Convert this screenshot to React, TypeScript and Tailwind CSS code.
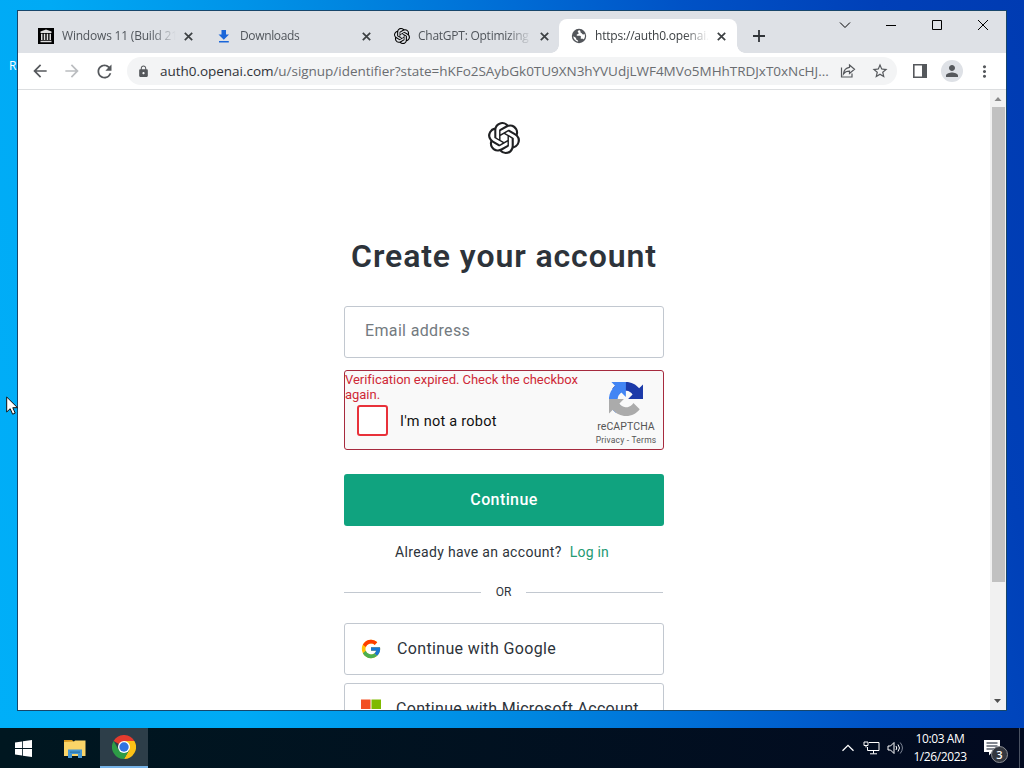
import * as React from "react"
import clsx from "clsx"
import { FcGoogle } from "react-icons/fc"
import { SiOpenai } from "react-icons/si"
import { MdArrowBack, MdArrowForward, MdRefresh, MdLock, MdStarBorder, MdPerson, MdMoreVert } from "react-icons/md"

interface TabItem {
    id: number
    title: string
    icon: React.ReactNode
    titleClass: string
    active?: boolean
    divider?: boolean
}

const tabs: TabItem[] = [
    { id: 1, title: "Windows 11 (Build 21", icon: <ArchiveIcon />, titleClass: "tracking-[-0.2px]", divider: true },
    { id: 2, title: "Downloads", icon: <DownloadIcon />, titleClass: "tracking-[-0.35px]", divider: true },
    { id: 3, title: "ChatGPT: Optimizing", icon: <SiOpenai size={16} />, titleClass: "tracking-[-0.25px]" },
    { id: 4, title: "https://auth0.openai.", icon: <GlobeIcon />, titleClass: "tracking-[-0.2px]", active: true },
]

function ArchiveIcon() {
    return (
        <svg width="16" height="16" viewBox="0 0 16 16">
            <path d="M0 0h16v16H0z" fill="#000" />
            <path d="M8 1.5 13.5 3.5V5h-11V3.5zM3 5.8h1.5V12H3zM5.8 5.8h1.5V12H5.8zM8.7 5.8h1.5V12H8.7zM11.5 5.8H13V12h-1.5zM2.5 12.7h11v1.5h-11z" fill="#ddd" />
        </svg>
    )
}

function DownloadIcon() {
    return (
        <svg width="14" height="16" viewBox="0 0 14 16">
            <path d="M4.5 2H9v4.500h3L6.800 11.800 1.500 6.500h3zM2 13h9.800v1.600H2z" fill="#1a66d9" />
        </svg>
    )
}

function GlobeIcon() {
    return (
        <svg width="16" height="16" viewBox="0 0 16 16" className="shrink-0">
            <circle cx="8" cy="8" r="7.2" fill="#53565b" />
            <path d="M8.600 2.300c-2 .2-2.300 1.500-1.300 2.300.9.700.2 1.500-.9 1.600-1 .1-.9 1.200-.2 1.600h2.700c1.100.1 1.200 1.300.8 2-.3.700.4 1.200 1.400 1 .9-.1 1.600.3 1.700.6 1.500-1.900 1.400-4 .7-5.300-.9.600-2.100.5-2.400-.4-.3-.8-1.200-.6-1.500-1.200-.3-.800.2-1.500-1-2.200zM2.200 8.200c.2 2.800 2.200 5 4.900 5.500.1-.9-.3-1.500-1-1.700-.9-.3-.8-1.300-1.200-2-.5-.8-1.600-1.200-2.700-1.800z" fill="#fff" />
        </svg>
    )
}

function CloseIcon() {
    return (
        <svg width="9" height="9" viewBox="0 0 9 9" className="shrink-0">
            <path d="M.8.8l7.400 7.400M8.200.8L.8 8.200" stroke="#3c4043" strokeWidth="1.7" />
        </svg>
    )
}

function Tab({ tab }: { tab: TabItem }) {
    return (
        <div
            className={clsx(
                "relative flex h-[34px] w-[178px] shrink-0 items-center pl-3",
                tab.active ? "-ml-px rounded-t-lg bg-white" : "bg-[#dee1e6]",
            )}
        >
            <div className="flex w-4 shrink-0 items-center justify-center">{tab.icon}</div>
            <div
                className={clsx(
                    "ml-2 w-[114px] overflow-hidden whitespace-nowrap text-[12px] [mask-image:linear-gradient(to_right,#000_78%,transparent)]",
                    tab.active ? "text-[#3c4043]" : "text-[#50555b]",
                    tab.titleClass,
                )}
            >
                {tab.title}
            </div>
            <div className="ml-2">
                <CloseIcon />
            </div>
            {tab.divider && <div className="absolute right-[-1px] top-[7px] h-5 w-px bg-[#8b8f96]" />}
            {tab.active && (
                <>
                    <div className="absolute bottom-0 left-[-8px] size-2 bg-[radial-gradient(circle_at_top_left,transparent_7.5px,#fff_8px)]" />
                    <div className="absolute bottom-0 right-[-8px] size-2 bg-[radial-gradient(circle_at_top_right,transparent_7.5px,#fff_8px)]" />
                </>
            )}
        </div>
    )
}

function TabStrip() {
    return (
        <div className="flex h-[42px] shrink-0 items-start bg-[#dee1e6] pl-2">
            <div className="flex pt-2">
                {tabs.map((tab) => (
                    <Tab key={tab.id} tab={tab} />
                ))}
            </div>
            <svg width="12" height="12" viewBox="0 0 12 12" className="ml-4 mt-[19px]">
                <path d="M6 0v12M0 6h12" stroke="#303438" strokeWidth="1.8" />
            </svg>
            {/* Window controls */}
            <div className="ml-auto mr-[17px] mt-[8px] flex gap-[34px] text-black">
                <svg width="12" height="12" viewBox="0 0 12 12" fill="none" stroke="currentColor">
                    <path d="M1 3.5l5 5 5-5" />
                </svg>
                <svg width="12" height="12" viewBox="0 0 12 12" fill="none" stroke="currentColor">
                    <path d="M1 6.5h10" />
                </svg>
                <svg width="12" height="12" viewBox="0 0 12 12" fill="none" stroke="currentColor">
                    <path d="M1.5 1.5h9v9h-9z" />
                </svg>
                <svg width="12" height="12" viewBox="0 0 12 12" fill="none" stroke="currentColor">
                    <path d="M1 1l10 10M11 1L1 11" />
                </svg>
            </div>
        </div>
    )
}

function Toolbar() {
    return (
        <div className="flex h-[37px] shrink-0 items-center border-b border-[#dcdee0] bg-white pl-3 text-[#55585c]">
            <MdArrowBack size={20} />
            <MdArrowForward size={20} className="ml-3 text-[#bbbdc0]" />
            <MdRefresh size={21} className="ml-3" />
            <div className="ml-3 flex h-7 w-[770px] items-center rounded-full bg-[#f3f4f5] pl-[10px]">
                <MdLock size={13} className="shrink-0" />
                <div className="ml-[10px] w-[676px] whitespace-nowrap text-[13.5px] tracking-[-0.03px] text-[#6a6d71]">
                    <span className="text-[#303338]">auth0.openai.com</span>
                    /u/signup/identifier?state=hKFo2SAybGk0TU9XN3hYVUdjLWF4MVo5MHhTRDJxT0xNcHJ...
                </div>
                <svg width="16" height="16" viewBox="0 0 16 16" fill="none" stroke="currentColor" strokeWidth="1.2" className="ml-1 shrink-0">
                    <path d="M1.5 4.5V14H12v-3.500M9.500 2l5 4.200-5 4.200V8.200C6.500 8.200 4.800 9 3.500 10.900 3.800 7.500 5.800 4.800 9.500 4.300z" />
                </svg>
                <MdStarBorder size={18} className="ml-[15px] shrink-0" />
            </div>
            <svg width="14" height="14" viewBox="0 0 14 14" className="ml-4">
                <path d="M.8.8h12.400v12.400H.8z" fill="none" stroke="currentColor" strokeWidth="1.6" />
                <path d="M9 1h4.500v12H9z" fill="currentColor" />
            </svg>
            <div className="ml-[14px] flex size-[22px] items-center justify-center rounded-full bg-[#dee1e6]">
                <MdPerson size={18} />
            </div>
            <MdMoreVert size={19} className="ml-[12px]" />
        </div>
    )
}

function RecaptchaLogo() {
    return (
        <svg width="34" height="34" viewBox="0 0 64 64">
            <path d="M64 31.955a33 33 0 0 0-.024-1.150V4.609l-7.242 7.242C50.807 4.596 41.819 0 31.775 0 21.323 0 12.038 4.984 6.190 12.700l11.870 11.995a15.740 15.740 0 0 1 4.807-5.396c2.072-1.617 5.008-2.940 8.908-2.940.471 0 .835.056 1.102.159 4.833.381 9.022 3.048 11.489 6.919l-8.402 8.402L64 31.955" fill="#1c3aa9" />
            <path d="M31.862.094l-1.150.024H4.516l7.242 7.242C4.503 13.287-.093 22.275-.093 32.319c0 10.452 4.984 19.737 12.700 25.585l11.995-11.870a15.740 15.740 0 0 1-5.396-4.807c-1.617-2.072-2.940-5.008-2.940-8.908 0-.471.056-.835.159-1.102.381-4.833 3.048-9.022 6.919-11.489l8.402 8.402L31.862.094" fill="#4285f4" />
            <path d="M.001 32.045l.024 1.150v26.196l7.242-7.242C13.194 59.404 22.182 64 32.226 64c10.452 0 19.737-4.984 25.585-12.700L45.940 39.305a15.740 15.740 0 0 1-4.807 5.396c-2.072 1.617-5.008 2.940-8.908 2.940-.471 0-.835-.056-1.102-.159-4.833-.381-9.022-3.048-11.489-6.919l8.402-8.402-28.035-.116" fill="#ababab" />
        </svg>
    )
}

function Recaptcha() {
    return (
        <div className="mt-3 flex h-20 justify-between rounded-[3px] border border-[#a62a3e] bg-[#f9f9f9]">
            <div className="w-[246px]">
                <p className="mt-px text-[13px] leading-[15px] tracking-[-0.03px] text-[#cf2937]">
                    Verification expired. Check the checkbox again.
                </p>
                <div className="ml-3 mt-[3px] flex items-center">
                    <div className="size-[31px] rounded-[3px] border-2 border-[#e8313a] bg-white" />
                    <span className="ml-3 mt-[3px] text-[14.5px] tracking-[0.25px] text-[#111]">I'm not a robot</span>
                </div>
            </div>
            <div className="flex w-[74px] shrink-0 flex-col items-center pt-[11px] text-[#555]">
                <RecaptchaLogo />
                <span className="mt-1 text-[10.5px] leading-[13px] tracking-[0.1px]">reCAPTCHA</span>
                <span className="mt-[1px] whitespace-nowrap text-[8.5px] leading-[13px] tracking-[0.2px]">Privacy - Terms</span>
            </div>
        </div>
    )
}

function SignupPage() {
    return (
        <div className="flex min-h-0 flex-1 bg-white">
            <main className="flex h-[620px] flex-1 justify-center overflow-hidden font-[Roboto,sans-serif]">
                <div className="w-[320px] pt-8">
                    <SiOpenai size={32} className="mx-auto text-[#202123]" />
                    <h1 className="mt-[82px] whitespace-nowrap text-center text-[32px] font-semibold leading-[40px] tracking-[0.9px] text-[#2d333a]">
                        Create your account
                    </h1>
                    <div className="mt-[30px] flex h-[52px] items-center rounded-[3px] border border-[#c2c8d0] pb-[3px] pl-5 text-[16px] tracking-[0.35px] text-[#737a80]">
                        Email address
                    </div>
                    <Recaptcha />
                    <div className="mt-6 flex h-[52px] items-center justify-center rounded-[3px] bg-[#10a37f] text-[16px] font-medium tracking-[0.4px] text-white">
                        Continue
                    </div>
                    <p className="mt-4 whitespace-nowrap pr-1 text-center text-[14px] leading-5 text-[#2d333a]">
                        <span className="tracking-[0.33px]">Already have an account?</span>
                        <span className="ml-2 tracking-[0.2px] text-[#249a73]">Log in</span>
                    </p>
                    <div className="mt-5 flex h-5 items-center pr-px text-[12px] text-[#2d333a]">
                        <div className="h-px flex-1 bg-[#c2c8d0]" />
                        <span className="w-[45px] text-center">OR</span>
                        <div className="h-px flex-1 bg-[#c2c8d0]" />
                    </div>
                    <div className="mt-[21px] flex h-[52px] items-center rounded-[3px] border border-[#c2c8d0] pl-[15px] text-[16px] text-[#2d333a]">
                        <FcGoogle size={22} />
                        <span className="ml-[15px] tracking-[0.35px]">Continue with Google</span>
                    </div>
                    <div className="mt-2 flex h-[52px] items-center rounded-[3px] border border-[#c2c8d0] pl-4 text-[16px] text-[#2d333a]">
                        <svg width="20" height="21" viewBox="0 0 21 21">
                            <path d="M0 0h10v10H0z" fill="#f25022" />
                            <path d="M11 0h10v10H11z" fill="#7fba00" />
                            <path d="M0 11h10v10H0z" fill="#00a4ef" />
                            <path d="M11 11h10v10H11z" fill="#ffb900" />
                        </svg>
                        <span className="ml-[15px] whitespace-nowrap tracking-[0.3px]">Continue with Microsoft Account</span>
                    </div>
                </div>
            </main>
            {/* Scrollbar */}
            <div className="flex w-4 shrink-0 flex-col items-center bg-[#f1f1f1]">
                <svg width="16" height="17" viewBox="0 0 16 17">
                    <path d="M4.5 11L8 7l3.500 4z" fill="#8a8a8a" />
                </svg>
                <div className="h-[475px] w-[13px] bg-[#c1c1c1]" />
                <svg width="16" height="17" viewBox="0 0 16 17" className="mt-auto">
                    <path d="M4 6l3.500 4L11 6z" fill="#505050" />
                </svg>
            </div>
        </div>
    )
}

function ChromeIcon() {
    return (
        <svg width="24" height="24" viewBox="0 0 24 24">
            <path d="M12 12L1.600 6A12 12 0 0 1 22.400 6z" fill="#e33b2e" />
            <path d="M12 12V6h10.400A12 12 0 0 1 12 24l5.200-9z" fill="#fbc116" />
            <path d="M12 12l5.200 3L12 24A12 12 0 0 1 1.600 6l5.200 9z" fill="#2d9c46" />
            <circle cx="12" cy="12" r="6" fill="#fff" />
            <circle cx="12" cy="12" r="4.7" fill="#2f73e0" />
        </svg>
    )
}

function Taskbar() {
    return (
        <div className="flex h-10 shrink-0 items-center bg-linear-to-r from-[#001720] to-[#020a20] text-white">
            <div className="flex w-[50px] justify-center">
                <svg width="17" height="17" viewBox="0 0 17 17" fill="#fff" className="ml-[-3px]">
                    <path d="M0 2.400l7-1v6.700H0zM7.800 1.300L17 0v8.100H7.800zM0 8.900h7v6.700l-7-1zM7.800 8.900H17V17l-9.200-1.300z" />
                </svg>
            </div>
            <div className="flex w-[50px] justify-center">
                <svg width="22" height="19" viewBox="0 0 22 19">
                    <path d="M0 1h8l2 2H0z" fill="#d99a20" />
                    <path d="M0 3l10-.5L11 1.500h10.500V17H0z" fill="#fbd568" />
                    <path d="M4 10.500h14V19h-4v-4H8v4H4z" fill="#4596d2" />
                    <path d="M6 12.500h10v1.300H6z" fill="#2b76ad" />
                </svg>
            </div>
            <div className="flex h-10 w-12 items-center justify-center border-b-2 border-[#76b3e8] bg-[#2d3e49]">
                <ChromeIcon />
            </div>
            <div className="ml-auto flex items-center">
                <svg width="12" height="8" viewBox="0 0 12 8" fill="none" stroke="#fff" strokeWidth="1.3">
                    <path d="M.5 6.800L6 1.300l5.500 5.500" />
                </svg>
                <svg width="17" height="14" viewBox="0 0 17 14" fill="none" stroke="#fff" className="ml-[9px]">
                    <path d="M6 1.500h10v8H4.500V6M10.500 9.500v3M7 12.800h7M1 1h4v3.500H1zM3 4.500v2" />
                </svg>
                <svg width="17" height="14" viewBox="0 0 17 14" fill="none" stroke="#fff" className="ml-[7px]">
                    <path d="M1 5h2.500L7 1.500v11L3.500 9H1zM9 5q1.500 2 0 4M11 3.500q3 3.500 0 7" />
                    <path d="M13.200 1.500q4.500 5.500 0 11" stroke="#7f8796" />
                </svg>
                <div className="ml-[7px] w-[58px] whitespace-nowrap text-center text-[12px] leading-[18px] tracking-[-0.4px]">
                    <div>10:03 AM</div>
                    <div>1/26/2023</div>
                </div>
                <div className="relative ml-[13px]">
                    <svg width="25" height="18" viewBox="0 0 25 18">
                        <path d="M2 1h16v12H10l-3 3.500V13H2z" fill="#fff" />
                        <path d="M4.500 4h11M4.500 7h11M4.500 10h8" stroke="#071022" />
                    </svg>
                    <div className="absolute left-[9px] top-[7px] flex size-[17px] items-center justify-center rounded-full border border-[#8b8e94] bg-[#33373f] text-[11px] font-semibold leading-none">
                        3
                    </div>
                </div>
                <div className="ml-3 mr-1 h-10 w-px bg-[#4a5262]" />
            </div>
        </div>
    )
}

export default function App() {
    return (
        <div className="relative flex h-[768px] w-[1024px] flex-col overflow-hidden bg-[#0078d7] font-['Open_Sans',sans-serif]">
            <div className="relative flex-1 bg-[linear-gradient(75deg,#00aff8_0%,#00aaf5_20%,#0093e8_36%,#0086e0_44%,#006cd5_58%,#0052c6_72%,#0040b8_88%,#003bb2_100%)]">
                <span className="absolute left-[9px] top-[58px] text-[12px] leading-4 text-white">R</span>
                <div className="absolute left-[17px] top-[10px] flex h-[701px] w-[990px] flex-col border border-[#17466b] bg-white">
                    <TabStrip />
                    <Toolbar />
                    <SignupPage />
                </div>
                {/* Mouse pointer */}
                <svg width="13" height="20" viewBox="0 0 13 20" className="absolute left-[6px] top-[396px]">
                    <path d="M.7 1v15l3.500-3.300 2.400 5.500 2.600-1.100-2.400-5.400h4.700z" fill="#fff" stroke="#111" />
                </svg>
            </div>
            <Taskbar />
        </div>
    )
}
